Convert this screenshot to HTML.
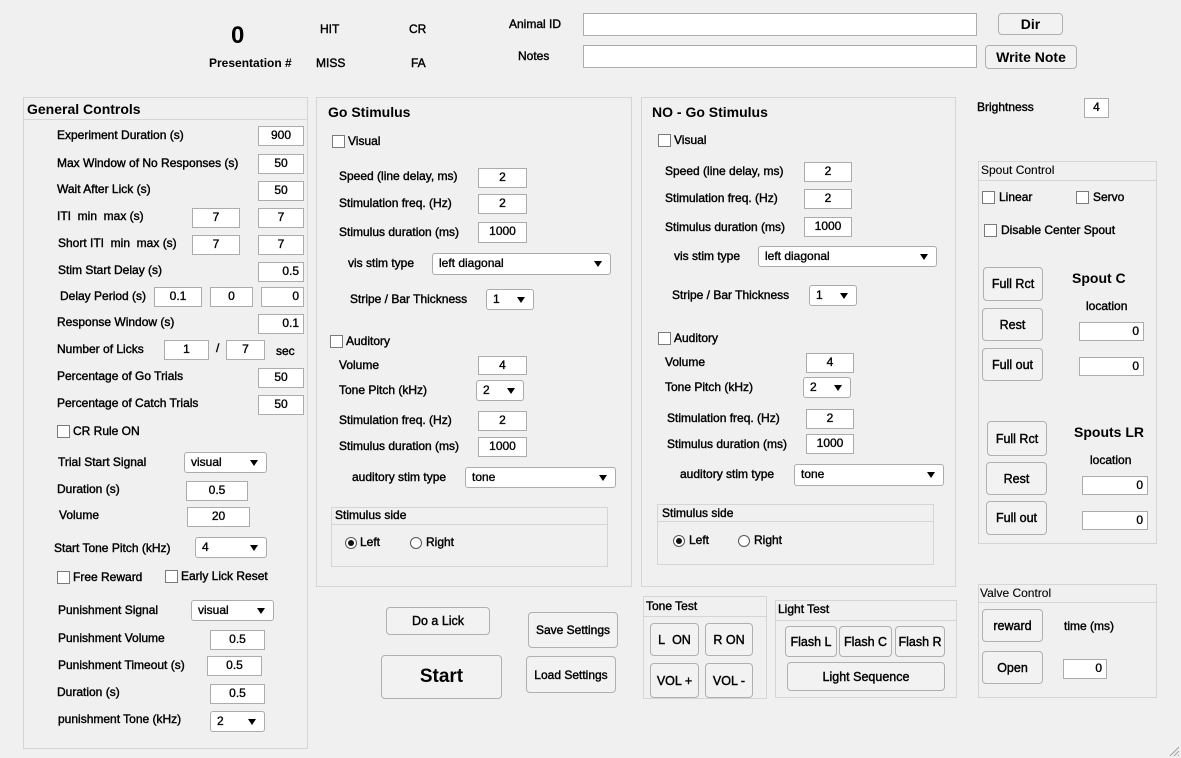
<!DOCTYPE html>
<html><head><meta charset="utf-8"><style>
body{margin:0;width:1181px;height:758px;background:#f0f0f0;position:relative;overflow:hidden;font-family:"Liberation Sans",Arial,sans-serif;color:#000}
div{position:absolute;box-sizing:border-box}
.t{font-size:12px;white-space:nowrap;line-height:14px;-webkit-text-stroke:0.4px #000}
.h{font-size:14px;font-weight:bold;white-space:nowrap;line-height:16px}
.e{background:#fff;border:1px solid #acacac;font-size:12px;text-align:center;line-height:17px;-webkit-text-stroke:0.35px #000}
.er{text-align:right;padding-right:4px}
.p{background:#fff;border:1px solid #acacac;border-radius:3px;font-size:12px;line-height:18px;padding-left:6px;-webkit-text-stroke:0.35px #000}
.p:after{content:"";position:absolute;right:8px;top:7px;border-left:4px solid transparent;border-right:4px solid transparent;border-top:6px solid #000}
.b{background:#f2f2f2;border:1px solid #b0b0b0;border-radius:4px;font-size:12.5px;text-align:center;display:flex;align-items:center;justify-content:center;-webkit-text-stroke:0.4px #000}
.pn{border:1px solid #d5d5d5}
.ln{height:1px;background:#d5d5d5}
.c{width:13px;height:13px;background:#fff;border:1px solid #7a7a7a}
.r{width:12px;height:12px;border-radius:50%;background:#fff;border:1px solid #555}
.r.on:after{content:"";position:absolute;left:2px;top:2px;width:6px;height:6px;border-radius:50%;background:#111}
</style></head><body>

<div class="h" style="left:231px;top:22px;font-size:24px;line-height:28px">0</div>
<div class="t" style="left:209px;top:56px;font-weight:bold;-webkit-text-stroke:0">Presentation #</div>
<div class="t" style="left:320px;top:22px">HIT</div>
<div class="t" style="left:409px;top:22px">CR</div>
<div class="t" style="left:316px;top:56px">MISS</div>
<div class="t" style="left:411px;top:56px">FA</div>
<div class="t" style="left:509px;top:17px">Animal ID</div>
<div class="e" style="left:583px;top:13px;width:394px;height:23px"></div>
<div class="b" style="left:998px;top:13px;width:65px;height:22px;font-weight:bold;font-size:14px;-webkit-text-stroke:0">Dir</div>
<div class="t" style="left:518px;top:49px">Notes</div>
<div class="e" style="left:583px;top:45px;width:394px;height:23px"></div>
<div class="b" style="left:985px;top:45px;width:92px;height:24px;font-weight:bold;font-size:14px;-webkit-text-stroke:0">Write Note</div>

<div class="pn" style="left:23px;top:97px;width:285px;height:652px"></div>
<div class="ln" style="left:24px;top:119px;width:283px"></div>
<div class="h" style="left:27px;top:101px">General Controls</div>

<div class="t" style="left:57px;top:128px">Experiment Duration (s)</div><div class="e" style="left:258px;top:126px;width:46px;height:20px">900</div>
<div class="t" style="left:57px;top:156px">Max Window of No Responses (s)</div><div class="e" style="left:258px;top:154px;width:46px;height:20px">50</div>
<div class="t" style="left:57px;top:182px">Wait After Lick (s)</div><div class="e" style="left:258px;top:181px;width:46px;height:20px">50</div>
<div class="t" style="left:57px;top:209px">ITI&nbsp; min&nbsp; max (s)</div><div class="e" style="left:192px;top:208px;width:48px;height:20px">7</div><div class="e" style="left:258px;top:208px;width:46px;height:20px">7</div>
<div class="t" style="left:58px;top:236px">Short ITI&nbsp; min&nbsp; max (s)</div><div class="e" style="left:192px;top:235px;width:48px;height:20px">7</div><div class="e" style="left:258px;top:235px;width:46px;height:20px">7</div>
<div class="t" style="left:58px;top:263px">Stim Start Delay (s)</div><div class="e er" style="left:258px;top:262px;width:46px;height:20px">0.5</div>
<div class="t" style="left:60px;top:289px">Delay Period (s)</div><div class="e" style="left:154px;top:287px;width:48px;height:20px">0.1</div><div class="e" style="left:210px;top:287px;width:43px;height:20px">0</div><div class="e er" style="left:261px;top:287px;width:43px;height:20px">0</div>
<div class="t" style="left:57px;top:315px">Response Window (s)</div><div class="e er" style="left:258px;top:314px;width:46px;height:20px">0.1</div>
<div class="t" style="left:57px;top:342px">Number of Licks</div><div class="e" style="left:164px;top:340px;width:45px;height:20px">1</div><div class="t" style="left:216px;top:341px">/</div><div class="e" style="left:226px;top:340px;width:39px;height:20px">7</div><div class="t" style="left:276px;top:344px">sec</div>
<div class="t" style="left:57px;top:369px">Percentage of Go Trials</div><div class="e" style="left:258px;top:368px;width:46px;height:20px">50</div>
<div class="t" style="left:57px;top:396px">Percentage of Catch Trials</div><div class="e" style="left:258px;top:395px;width:46px;height:20px">50</div>
<div class="c" style="left:57px;top:425px"></div><div class="t" style="left:73px;top:424px">CR Rule ON</div>
<div class="t" style="left:58px;top:455px">Trial Start Signal</div><div class="p" style="left:184px;top:452px;width:83px;height:21px">visual</div>
<div class="t" style="left:57px;top:482px">Duration (s)</div><div class="e" style="left:186px;top:481px;width:62px;height:20px">0.5</div>
<div class="t" style="left:59px;top:508px">Volume</div><div class="e" style="left:187px;top:507px;width:63px;height:20px">20</div>
<div class="t" style="left:54px;top:541px">Start Tone Pitch (kHz)</div><div class="p" style="left:195px;top:537px;width:72px;height:21px">4</div>
<div class="c" style="left:57px;top:571px"></div><div class="t" style="left:73px;top:570px">Free Reward</div>
<div class="c" style="left:165px;top:570px"></div><div class="t" style="left:181px;top:569px">Early Lick Reset</div>
<div class="t" style="left:58px;top:603px">Punishment Signal</div><div class="p" style="left:191px;top:600px;width:83px;height:21px">visual</div>
<div class="t" style="left:58px;top:631px">Punishment Volume</div><div class="e" style="left:210px;top:630px;width:55px;height:20px">0.5</div>
<div class="t" style="left:58px;top:658px">Punishment Timeout (s)</div><div class="e" style="left:207px;top:656px;width:55px;height:20px">0.5</div>
<div class="t" style="left:57px;top:685px">Duration (s)</div><div class="e" style="left:210px;top:684px;width:55px;height:20px">0.5</div>
<div class="t" style="left:58px;top:712px">punishment Tone (kHz)</div><div class="p" style="left:210px;top:711px;width:55px;height:21px">2</div>

<div class="pn" style="left:316px;top:97px;width:316px;height:490px"></div>
<div class="h" style="left:328px;top:104px">Go Stimulus</div>
<div class="c" style="left:332px;top:135px"></div><div class="t" style="left:348px;top:134px">Visual</div>
<div class="t" style="left:339px;top:169px">Speed (line delay, ms)</div><div class="e" style="left:478px;top:168px;width:49px;height:20px">2</div>
<div class="t" style="left:339px;top:196px">Stimulation freq. (Hz)</div><div class="e" style="left:478px;top:194px;width:49px;height:20px">2</div>
<div class="t" style="left:339px;top:225px">Stimulus duration (ms)</div><div class="e" style="left:478px;top:222px;width:49px;height:21px">1000</div>
<div class="t" style="left:348px;top:256px">vis stim type</div><div class="p" style="left:432px;top:253px;width:179px;height:22px">left diagonal</div>
<div class="t" style="left:350px;top:292px">Stripe / Bar Thickness</div><div class="p" style="left:486px;top:289px;width:48px;height:21px">1</div>
<div class="c" style="left:330px;top:335px"></div><div class="t" style="left:346px;top:334px">Auditory</div>
<div class="t" style="left:339px;top:358px">Volume</div><div class="e" style="left:478px;top:356px;width:49px;height:19px">4</div>
<div class="t" style="left:339px;top:383px">Tone Pitch (kHz)</div><div class="p" style="left:476px;top:380px;width:48px;height:21px">2</div>
<div class="t" style="left:339px;top:413px">Stimulation freq. (Hz)</div><div class="e" style="left:478px;top:411px;width:49px;height:20px">2</div>
<div class="t" style="left:339px;top:439px">Stimulus duration (ms)</div><div class="e" style="left:478px;top:437px;width:49px;height:20px">1000</div>
<div class="t" style="left:352px;top:470px">auditory stim type</div><div class="p" style="left:465px;top:467px;width:151px;height:21px">tone</div>
<div class="pn" style="left:331px;top:507px;width:277px;height:60px"></div>
<div class="ln" style="left:332px;top:524px;width:275px"></div>
<div class="t" style="left:335px;top:508px">Stimulus side</div>
<div class="r on" style="left:345px;top:537px"></div><div class="t" style="left:360px;top:535px">Left</div>
<div class="r" style="left:410px;top:537px"></div><div class="t" style="left:426px;top:535px">Right</div>

<div class="pn" style="left:641px;top:97px;width:315px;height:490px"></div>
<div class="h" style="left:652px;top:104px">NO - Go Stimulus</div>
<div class="c" style="left:658px;top:134px"></div><div class="t" style="left:674px;top:133px">Visual</div>
<div class="t" style="left:665px;top:164px">Speed (line delay, ms)</div><div class="e" style="left:804px;top:162px;width:48px;height:20px">2</div>
<div class="t" style="left:665px;top:191px">Stimulation freq. (Hz)</div><div class="e" style="left:804px;top:189px;width:48px;height:20px">2</div>
<div class="t" style="left:665px;top:220px">Stimulus duration (ms)</div><div class="e" style="left:804px;top:217px;width:48px;height:20px">1000</div>
<div class="t" style="left:674px;top:249px">vis stim type</div><div class="p" style="left:758px;top:246px;width:179px;height:21px">left diagonal</div>
<div class="t" style="left:672px;top:288px">Stripe / Bar Thickness</div><div class="p" style="left:809px;top:285px;width:48px;height:21px">1</div>
<div class="c" style="left:658px;top:332px"></div><div class="t" style="left:674px;top:331px">Auditory</div>
<div class="t" style="left:665px;top:355px">Volume</div><div class="e" style="left:806px;top:353px;width:48px;height:20px">4</div>
<div class="t" style="left:665px;top:380px">Tone Pitch (kHz)</div><div class="p" style="left:803px;top:377px;width:48px;height:21px">2</div>
<div class="t" style="left:667px;top:411px">Stimulation freq. (Hz)</div><div class="e" style="left:806px;top:409px;width:48px;height:20px">2</div>
<div class="t" style="left:667px;top:437px">Stimulus duration (ms)</div><div class="e" style="left:806px;top:434px;width:48px;height:20px">1000</div>
<div class="t" style="left:680px;top:467px">auditory stim type</div><div class="p" style="left:794px;top:464px;width:150px;height:22px">tone</div>
<div class="pn" style="left:657px;top:504px;width:277px;height:61px"></div>
<div class="ln" style="left:658px;top:521px;width:275px"></div>
<div class="t" style="left:662px;top:506px">Stimulus side</div>
<div class="r on" style="left:673px;top:535px"></div><div class="t" style="left:689px;top:533px">Left</div>
<div class="r" style="left:738px;top:535px"></div><div class="t" style="left:754px;top:533px">Right</div>

<div class="t" style="left:977px;top:100px">Brightness</div><div class="e" style="left:1084px;top:98px;width:25px;height:20px">4</div>

<div class="pn" style="left:978px;top:161px;width:179px;height:383px"></div>
<div class="ln" style="left:979px;top:180px;width:177px"></div>
<div class="t" style="left:981px;top:163px;-webkit-text-stroke:0.1px #000">Spout Control</div>
<div class="c" style="left:982px;top:191px"></div><div class="t" style="left:999px;top:190px">Linear</div>
<div class="c" style="left:1076px;top:191px"></div><div class="t" style="left:1093px;top:190px">Servo</div>
<div class="c" style="left:984px;top:224px"></div><div class="t" style="left:1001px;top:223px">Disable Center Spout</div>
<div class="b" style="left:983px;top:267px;width:60px;height:34px">Full Rct</div>
<div class="b" style="left:982px;top:308px;width:61px;height:33px">Rest</div>
<div class="b" style="left:982px;top:348px;width:61px;height:33px">Full out</div>
<div class="h" style="left:1072px;top:270px">Spout C</div>
<div class="t" style="left:1086px;top:299px">location</div>
<div class="e er" style="left:1079px;top:322px;width:65px;height:19px">0</div>
<div class="e er" style="left:1079px;top:357px;width:65px;height:19px">0</div>
<div class="b" style="left:987px;top:421px;width:60px;height:35px">Full Rct</div>
<div class="b" style="left:986px;top:462px;width:61px;height:33px">Rest</div>
<div class="b" style="left:986px;top:501px;width:61px;height:34px">Full out</div>
<div class="h" style="left:1074px;top:424px">Spouts LR</div>
<div class="t" style="left:1090px;top:453px">location</div>
<div class="e er" style="left:1082px;top:476px;width:66px;height:19px">0</div>
<div class="e er" style="left:1082px;top:511px;width:66px;height:19px">0</div>

<div class="pn" style="left:978px;top:584px;width:179px;height:114px"></div>
<div class="ln" style="left:979px;top:602px;width:177px"></div>
<div class="t" style="left:980px;top:586px;-webkit-text-stroke:0.1px #000">Valve Control</div>
<div class="b" style="left:982px;top:609px;width:61px;height:33px">reward</div>
<div class="t" style="left:1064px;top:619px">time (ms)</div>
<div class="b" style="left:982px;top:651px;width:61px;height:33px">Open</div>
<div class="e er" style="left:1063px;top:659px;width:44px;height:20px">0</div>

<div class="b" style="left:386px;top:607px;width:104px;height:28px">Do a Lick</div>
<div class="b" style="left:381px;top:655px;width:121px;height:44px;font-size:19px;font-weight:bold;-webkit-text-stroke:0">Start</div>
<div class="b" style="left:528px;top:612px;width:90px;height:36px;font-size:12px">Save Settings</div>
<div class="b" style="left:526px;top:656px;width:90px;height:37px;font-size:12px">Load Settings</div>

<div class="pn" style="left:643px;top:596px;width:124px;height:103px"></div>
<div class="ln" style="left:644px;top:616px;width:122px"></div>
<div class="t" style="left:646px;top:599px">Tone Test</div>
<div class="b" style="left:650px;top:623px;width:49px;height:33px">L&nbsp; ON</div>
<div class="b" style="left:705px;top:623px;width:48px;height:33px">R ON</div>
<div class="b" style="left:650px;top:663px;width:49px;height:35px">VOL +</div>
<div class="b" style="left:705px;top:663px;width:48px;height:35px">VOL -</div>

<div class="pn" style="left:775px;top:600px;width:182px;height:98px"></div>
<div class="ln" style="left:776px;top:620px;width:180px"></div>
<div class="t" style="left:778px;top:602px">Light Test</div>
<div class="b" style="left:785px;top:626px;width:52px;height:31px">Flash L</div>
<div class="b" style="left:839px;top:626px;width:53px;height:31px">Flash C</div>
<div class="b" style="left:895px;top:626px;width:50px;height:31px">Flash R</div>
<div class="b" style="left:787px;top:662px;width:158px;height:29px">Light Sequence</div>

<svg style="position:absolute;left:1168px;top:745px" width="12" height="12"><path d="M11 2L2 11M11 6L6 11M11 10L10 11" stroke="#a0a0a0" stroke-width="1"/></svg>
</body></html>
